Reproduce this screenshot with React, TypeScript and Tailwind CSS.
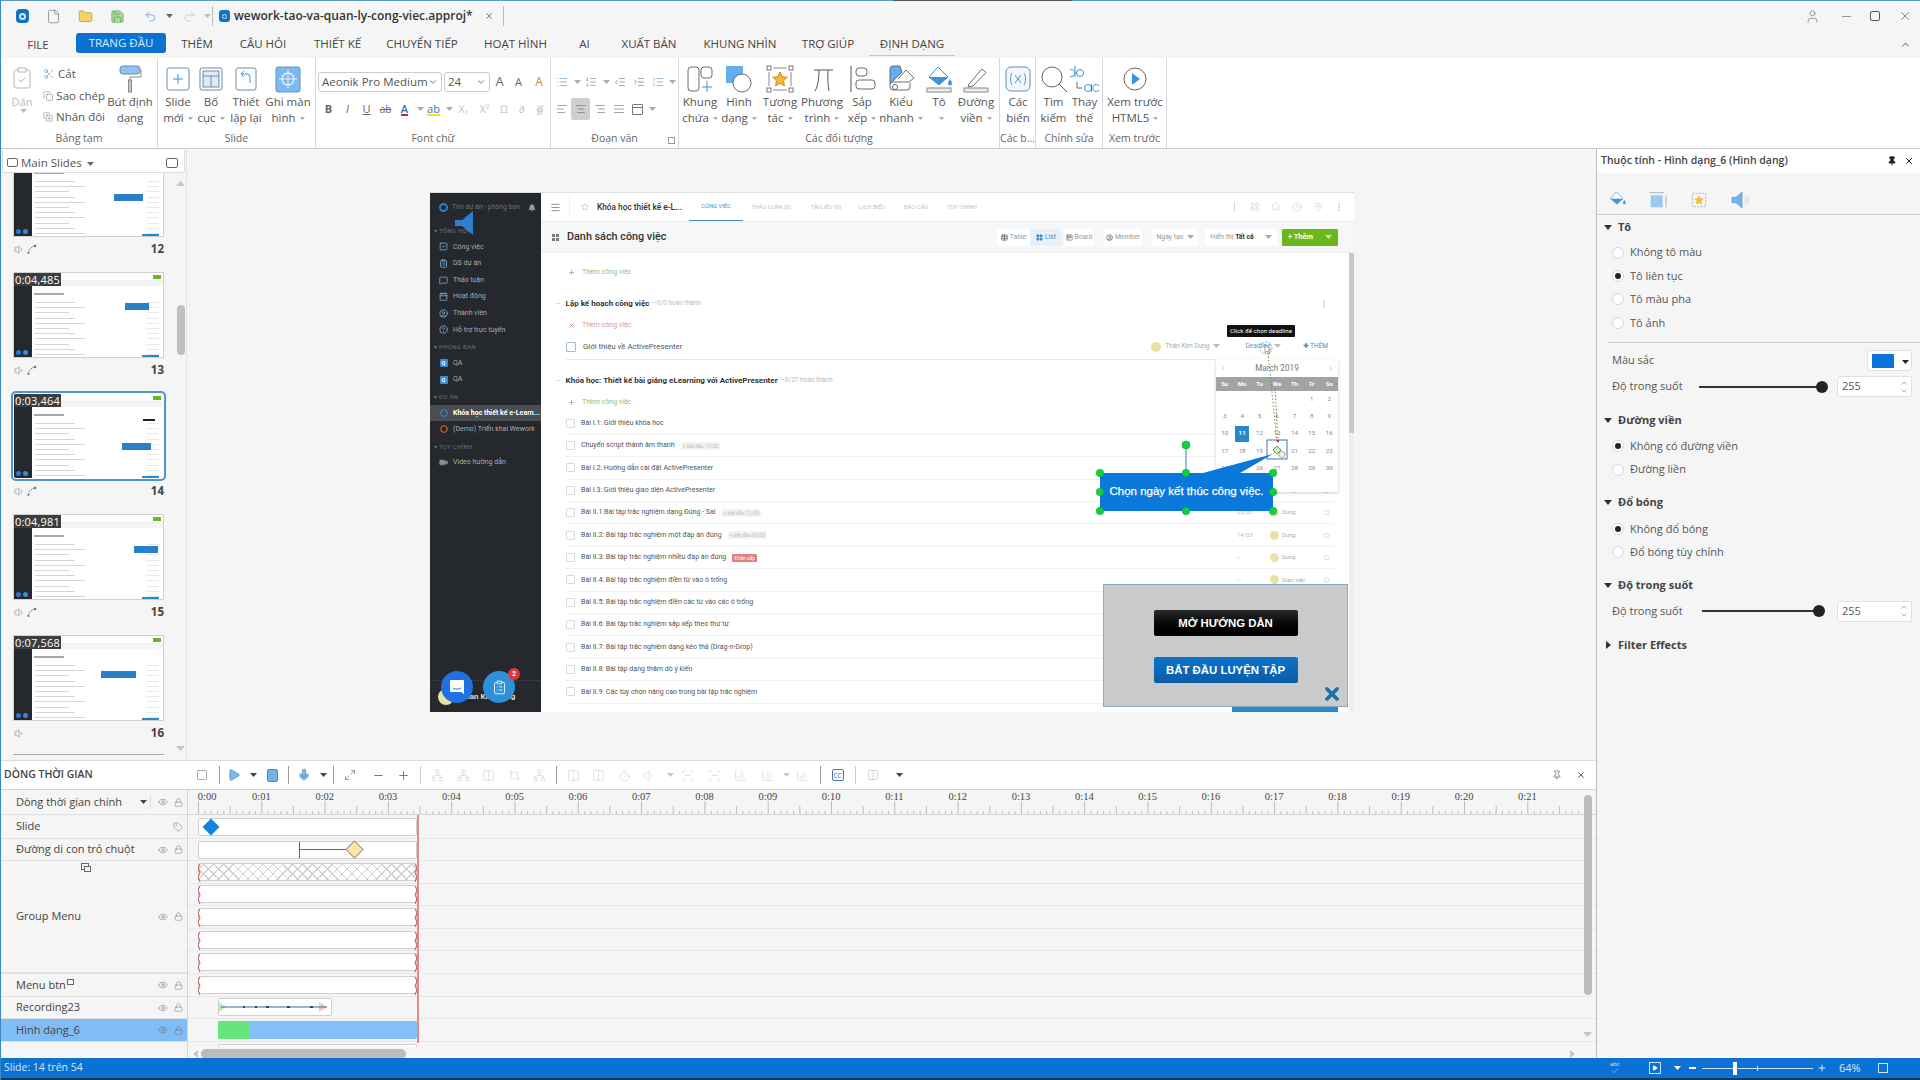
import React from "react";
import {
  Scissors, Copy, CopyPlus, ClipboardCheck, Undo2, Redo2, X, Minus, Plus, User, Eye, Lock, Tag, Pin, ChevronDown, ChevronUp,
  File, Folder, Save, List, ListOrdered, AlignLeft, AlignCenter, AlignRight, AlignJustify, Star, Bell, Menu, Search,
  SquareCheck, ClipboardList, MessageSquare, Calendar, CircleUser, CircleHelp, Video, LayoutGrid, Table, Clock, MapPin,
  EllipsisVertical, Square, Play, Mic, Volume1, Columns2, BarChart3, Network, Crop, Maximize2, Timer, Circle,
  ScanLine, Check, Indent, Outdent, ListCollapse, Trello,
} from "lucide-react";

const Caret = ({ c = "#8a8a8a" }: { c?: string }) => (
  <svg width="7" height="4" viewBox="0 0 7 4" className="inline-block ml-[3px] align-middle shrink-0"><path d="M0 0h7L3.5 4z" fill={c} /></svg>
);
const Tiny = () => (
  <svg width="5" height="3" viewBox="0 0 5 3" className="inline-block ml-[4px] align-middle shrink-0"><path d="M0 0h5L2.500 3z" fill="#aaa" /></svg>
);

/* ---------- ribbon icons ---------- */
const Ico = ({ children }: { children: React.ReactNode }) => (
  <svg width="30" height="30" viewBox="0 0 30 30" fill="none" stroke="#6b6b6b" strokeWidth="1">{children}</svg>
);
const icons: Record<string, React.ReactNode> = {
  newSlide: <Ico><rect x="4" y="4" width="22" height="22" rx="2" stroke="#6f8ca8" /><path d="M15 10v10M10 15h10" stroke="#3f93d8" /></Ico>,
  layout: <Ico><rect x="4" y="4" width="22" height="22" rx="2" stroke="#6f8ca8" /><rect x="7" y="7" width="16" height="16" fill="#dcebf7" stroke="#6f8ca8" /><path d="M7 12h16M15 12v11" stroke="#6f8ca8" /></Ico>,
  reset: <Ico><rect x="5" y="4" width="20" height="22" rx="2" stroke="#6f8ca8" /><path d="M19 19v-6a3 3 0 0 0-3-3h-5m2-3l-3 3 3 3" stroke="#3f93d8" /></Ico>,
  record: <svg width="30" height="30" viewBox="0 0 30 30" fill="none"><rect x="3" y="3" width="24" height="25" rx="2" fill="#7db9ee" stroke="#5d97c8" /><circle cx="15" cy="15" r="6" stroke="#e8f3fc" strokeWidth="1.4" /><path d="M15 6v18M6 15h18" stroke="#e8f3fc" /></svg>,
  frame: <Ico><rect x="3" y="3" width="11" height="24" rx="3" /><rect x="16" y="3" width="11" height="11" rx="3" /><path d="M22 17v11M17 23h10" stroke="#3f93d8" /></Ico>,
  shape: <svg width="30" height="30" viewBox="0 0 30 30" fill="none"><rect x="2" y="2" width="17" height="17" fill="#63aef0" /><circle cx="18" cy="19" r="9" fill="#fff" stroke="#6b6b6b" /></svg>,
  interact: <svg width="30" height="30" viewBox="0 0 30 30" fill="none"><rect x="4" y="4" width="22" height="22" stroke="#888" strokeDasharray="14 8" strokeDashoffset="-4" /><rect x="2" y="2" width="4" height="4" fill="#fff" stroke="#777" /><rect x="24" y="2" width="4" height="4" fill="#fff" stroke="#777" /><rect x="2" y="24" width="4" height="4" fill="#fff" stroke="#777" /><rect x="24" y="24" width="4" height="4" fill="#fff" stroke="#777" /><path d="M15 8l2.200 4.600 5 .7-3.700 3.500 1 5L15 19.400l-4.500 2.400 1-5-3.700-3.500 5-.7z" fill="#f5b63a" stroke="#c98d20" /></svg>,
  pi: <Ico><path d="M7 6h19M12 6c0 8-1 16-4 21M21 6c-.5 8 0 16 1 21" stroke="#555" /></Ico>,
  arrange: <Ico><path d="M4 2v26" stroke="#555" /><rect x="9" y="4" width="11" height="8" rx="3" /><rect x="9" y="16" width="19" height="9" rx="3" /></Ico>,
  quick: <svg width="30" height="30" viewBox="0 0 30 30" fill="none"><path d="M4 5a3 3 0 0 1 3-3h7l2 6-12 12z" fill="#63aef0" stroke="#6b6b6b" /><path d="M12 15l8-9 8 8-5 4H6a3 3 0 0 0-2 2v3a3 3 0 0 0 3 3h14a3 3 0 0 0 3-3v-4" stroke="#6b6b6b" /><circle cx="9" cy="23" r="2.500" stroke="#6b6b6b" /></svg>,
  fill: <svg width="30" height="30" viewBox="0 0 30 30" fill="none"><path d="M14 3l10 10-9 8-10-8z" fill="#fff" stroke="#3f93d8" /><path d="M5 13h19l-9 8z" fill="#3f93d8" /><path d="M26 15c1.500 2.500 2 3.500 2 4.500a2 2 0 0 1-4 0c0-1 .5-2 2-4.500z" fill="#3f93d8" /><rect x="3" y="24" width="24" height="4" fill="#eee" stroke="#888" /></svg>,
  line: <Ico><path d="M8 20L21 5l4 3.500L12 22l-5 1z" /><rect x="3" y="24" width="24" height="4" fill="#eee" stroke="#888" /></Ico>,
  vars: <svg width="30" height="30" viewBox="0 0 30 30" fill="none"><rect x="3" y="3" width="24" height="24" rx="5" stroke="#5b8fb8" fill="#f2f8fd" /><path d="M9 9c-2 3-2 9 0 12M21 9c2 3 2 9 0 12" stroke="#5b8fb8" /><path d="M12 11l6 8M18 11l-6 8" stroke="#3f93d8" /></svg>,
  find: <Ico><circle cx="13" cy="13" r="10" stroke="#666" /><path d="M20 20l8 8" stroke="#666" /></Ico>,
  replace: <svg width="30" height="30" viewBox="0 0 30 30" fill="none"><circle cx="10" cy="9" r="3.500" stroke="#3f93d8" /><path d="M5 2v11M5 9a3.500 3.500 0 1 0 0 .1" stroke="#3f93d8" /><path d="M7 18v6h5" stroke="#666" /><circle cx="18" cy="24" r="3.500" stroke="#3f93d8" /><path d="M21.500 20v8" stroke="#3f93d8" /><path d="M29 22a3.500 3.500 0 1 0 0 4" stroke="#3f93d8" /></svg>,
  preview: <svg width="30" height="30" viewBox="0 0 30 30" fill="none"><circle cx="15" cy="15" r="11" stroke="#666" /><path d="M12 9l8 6-8 6z" fill="#3f93d8" /></svg>,
};

const Big = ({ w, ic, a, b, caret = true }: { w: string; ic: string; a: string; b: string; caret?: boolean }) => (
  <div className={`${w} flex flex-col items-center shrink-0`}>
    <div className="h-[36px] flex items-center justify-center pt-[6px]">{icons[ic]}</div>
    <div className="text-[11.5px] leading-[16px] whitespace-nowrap text-center">{a}</div>
    <div className="text-[11.5px] leading-[16px] whitespace-nowrap text-center">{b}{caret && <Tiny />}</div>
  </div>
);

const Group = ({ w, label, children, corner }: { w: string; label: string; children: React.ReactNode; corner?: boolean }) => (
  <div className={`${w} shrink-0 h-full flex flex-col border-r border-[#d8d8d8] relative`}>
    <div className="h-[70px] flex">{children}</div>
    <div className="h-[20px] text-[10.5px] text-[#666] text-center leading-[20px] whitespace-nowrap overflow-hidden">{label}</div>
    {corner && <div className="absolute right-[3px] bottom-[4px] w-[7px] h-[7px] border border-[#999]" />}
  </div>
);

const TABS: [string, string][] = [
  ["THÊM", "w-[62px]"], ["CÂU HỎI", "w-[70px]"], ["THIẾT KẾ", "w-[79px]"], ["CHUYỂN TIẾP", "w-[90px]"], ["HOẠT HÌNH", "w-[97px]"],
  ["AI", "w-[41px]"], ["XUẤT BẢN", "w-[88px]"], ["KHUNG NHÌN", "w-[94px]"], ["TRỢ GIÚP", "w-[82px]"],
];

const TitleBar = () => (
  <div className="h-[30px] shrink-0 flex items-center text-[#555]">
    <div className="w-[11px]" />
    <div className="w-[20px] h-[18px] flex items-center justify-center"><div className="w-[13px] h-[14px] rounded-[4px] bg-[#1273c4] flex items-center justify-center"><div className="w-[7px] h-[7px] rounded-full border-2 border-[#cde6fa]" /></div></div>
    <div className="w-[42px] flex justify-center"><File size={15} strokeWidth={1} color="#666" /></div>
    <div className="w-[22px] flex justify-center"><Folder size={15} strokeWidth={1} color="#a88a20" fill="#f4d467" /></div>
    <div className="w-[43px] flex justify-center"><Save size={15} strokeWidth={1} color="#5a8a50" fill="#a6dc9a" /></div>
    <div className="w-[22px] flex justify-center"><Undo2 size={13} color="#4f92c8" strokeWidth={1.2} /></div>
    <div className="w-[14px] flex justify-center"><Caret c="#666" /></div>
    <div className="w-[28px] flex justify-center"><Redo2 size={13} color="#bdbdbd" strokeWidth={1.2} /></div>
    <div className="w-[6px] flex justify-center"><Caret c="#bdbdbd" /></div>
    <div className="w-px h-[20px] bg-[#bbb] ml-[3px]" />
    <div className="ml-[6px] w-[11px] h-[12px] rounded-[3px] bg-[#1273c4] flex items-center justify-center"><div className="w-[5px] h-[5px] rounded-full border border-[#cde6fa]" /></div>
    <div className="ml-[4px] text-[12px] font-semibold text-[#333] leading-none whitespace-nowrap">wework-tao-va-quan-ly-cong-viec.approj*</div>
    <X size={10} className="ml-[11px]" color="#666" strokeWidth={2} />
    <div className="w-px h-[20px] bg-[#bbb] ml-[9px]" />
    <div className="flex-1" />
    <User size={15} strokeWidth={1} color="#666" />
    <div className="w-[9px] h-px bg-[#999] ml-[22px]" />
    <div className="ml-[19px] w-[10px] h-[10px] border border-[#555] rounded-[2px] bg-[#f5f5f5]" />
    <X size={14} className="ml-[18px] mr-[8px]" color="#555" strokeWidth={1.2} />
  </div>
);

const TabRow = () => (
  <div className="h-[27px] shrink-0 flex items-center text-[11.5px] text-[#444] leading-none relative">
    <div className="w-[17px]" />
    <div className="w-[40px] text-center">FILE</div>
    <div className="w-[18px]" />
    <div className="w-[90px] h-[20px] mb-[4px] rounded-[3px] bg-[#0b72d3] text-[#d9ecfb] flex items-center justify-center">TRANG ĐẦU</div>
    {TABS.map(([t, w]) => <div key={t} className={`${w} text-center whitespace-nowrap mb-[2px]`}>{t}</div>)}
    <div className="w-[86px] h-[23px] flex items-center justify-center border-b border-[#f0c078] text-[#444]">ĐỊNH DẠNG</div>
    <div className="flex-1" />
    <ChevronUp size={11} className="mr-[9px]" color="#444" strokeWidth={2} />
  </div>
);

const Sm = ({ children, cls = "w-[19px]", bg = "" }: { children: React.ReactNode; cls?: string; bg?: string }) => (
  <div className={`${cls} h-[20px] flex items-center justify-center shrink-0 text-[#666] ${bg}`}>{children}</div>
);

const Ribbon = () => (
  <div className="h-[91px] shrink-0 bg-white border-b border-[#ccc] flex text-[#555]">
    <Group w="w-[157px]" label="Bảng tạm">
      <div className="w-[34px] flex flex-col items-center pt-[8px] ml-[4px] text-[#bdbdbd]">
        <ClipboardCheck size={24} strokeWidth={1} color="#b5b5b5" />
        <div className="text-[11px] mt-[5px] leading-[14px]">Dán</div>
        <Caret c="#bbb" />
      </div>
      <div className="flex flex-col w-[66px] text-[11.5px] text-[#555]">
        <div className="h-[22px] mt-[5px] flex items-center gap-[3px] ml-[4px]"><Scissors size={12} strokeWidth={1} color="#3f80b8" />Cắt</div>
        <div className="h-[21px] flex items-center gap-[3px] ml-[4px] whitespace-nowrap"><Copy size={12} strokeWidth={1} />Sao chép</div>
        <div className="h-[21px] flex items-center gap-[3px] ml-[4px] whitespace-nowrap"><CopyPlus size={12} strokeWidth={1} />Nhân đôi</div>
      </div>
      <div className="w-[50px] flex flex-col items-center">
        <div className="h-[36px] flex items-center pt-[6px]">
          <svg width="24" height="30" viewBox="0 0 24 30" fill="none"><rect x="2" y="2" width="20" height="8" rx="3" fill="#8fc3f0" stroke="#6f8ca8" /><path d="M22 6h1v7H12v3" stroke="#888" /><rect x="10.500" y="16" width="3" height="12" fill="#c9c9c9" stroke="#888" /></svg>
        </div>
        <div className="text-[11.5px] leading-[16px] whitespace-nowrap">Bút định</div>
        <div className="text-[11.5px] leading-[16px]">dạng</div>
      </div>
    </Group>
    <Group w="w-[158px]" label="Slide">
      <div className="w-[3px]" />
      <Big w="w-[34px]" ic="newSlide" a="Slide" b="mới" />
      <Big w="w-[32px]" ic="layout" a="Bố" b="cục" />
      <Big w="w-[38px]" ic="reset" a="Thiết" b="lập lại" caret={false} />
      <Big w="w-[46px]" ic="record" a="Ghi màn" b="hình" />
    </Group>
    <Group w="w-[235px]" label="Font chữ">
      <div className="flex flex-col w-full pl-[2px] pt-[14px]">
        <div className="flex items-center h-[20px]">
          <div className="w-[124px] h-[20px] border border-[#ccc] rounded-[3px] flex items-center justify-between px-[3px] text-[11.5px] text-[#555] whitespace-nowrap">Aeonik Pro Medium<ChevronDown size={10} /></div>
          <div className="w-[46px] h-[20px] ml-[2px] border border-[#ccc] rounded-[3px] flex items-center justify-between px-[3px] text-[11.5px] text-[#555]">24<ChevronDown size={10} /></div>
          <Sm cls="w-[19px] text-[13px]">A</Sm><Sm cls="w-[19px] text-[11px]">A</Sm><Sm cls="w-[22px] text-[12px] text-[#c98d20]">A</Sm>
        </div>
        <div className="flex items-center h-[22px] mt-[6px] ml-[1px] text-[11px]">
          <Sm cls="w-[19px] font-bold">B</Sm><Sm cls="w-[19px] italic">I</Sm><Sm cls="w-[19px] underline">U</Sm><Sm cls="w-[19px] line-through text-[10px]">ab</Sm>
          <Sm cls="w-[19px]"><span className="border-b-2 border-[#d92020] leading-[11px] text-[#3377bb] font-semibold">A</span></Sm><Sm cls="w-[10px]"><Caret c="#aaa" /></Sm>
          <Sm cls="w-[19px]"><span className="border-b-2 border-[#f5e020] leading-[11px] text-[#3377bb]">ab</span></Sm><Sm cls="w-[10px]"><Caret c="#aaa" /></Sm>
          <Sm cls="w-[21px] text-[#c0c0c0] text-[10px]">X₁</Sm><Sm cls="w-[21px] text-[#c0c0c0] text-[10px]">X²</Sm><Sm cls="w-[18px] text-[#c0c0c0] text-[10px]">Ω</Sm><Sm cls="w-[18px] text-[#c0c0c0] text-[10px]">∂</Sm><Sm cls="w-[18px] text-[#c0c0c0] text-[10px]">∯</Sm>
        </div>
      </div>
    </Group>
    <Group w="w-[128px]" label="Đoạn văn" corner>
      <div className="flex flex-col w-full pl-[1px] pt-[14px]">
        <div className="flex h-[20px] items-center">
          <Sm><List size={12} strokeWidth={1.2} color="#4b8cc4" /></Sm><Sm cls="w-[10px]"><Caret c="#aaa" /></Sm>
          <Sm><ListOrdered size={12} strokeWidth={1.2} color="#4b8cc4" /></Sm><Sm cls="w-[10px]"><Caret c="#aaa" /></Sm>
          <Sm><Outdent size={12} strokeWidth={1.2} /></Sm><Sm><Indent size={12} strokeWidth={1.2} /></Sm>
          <Sm><ListCollapse size={12} strokeWidth={1.2} color="#4b8cc4" /></Sm><Sm cls="w-[8px]"><Caret c="#aaa" /></Sm>
        </div>
        <div className="flex h-[22px] mt-[6px] items-center">
          <Sm><AlignLeft size={12} strokeWidth={1.2} /></Sm>
          <Sm bg="bg-[#cfcfcf] rounded-[2px] !h-[22px]"><AlignCenter size={12} strokeWidth={1.2} /></Sm>
          <Sm><AlignRight size={12} strokeWidth={1.2} /></Sm><Sm><AlignJustify size={12} strokeWidth={1.2} /></Sm>
          <Sm><div className="w-[11px] h-[11px] border border-[#777] rounded-[1px]"><div className="h-[3px] border-b border-[#777]" /></div></Sm><Sm cls="w-[8px]"><Caret c="#aaa" /></Sm>
        </div>
      </div>
    </Group>
    <Group w="w-[321px]" label="Các đối tượng">
      <div className="w-[2px]" />
      <Big w="w-[38px]" ic="frame" a="Khung" b="chứa" />
      <Big w="w-[40px]" ic="shape" a="Hình" b="dạng" />
      <Big w="w-[42px]" ic="interact" a="Tương" b="tác" />
      <Big w="w-[42px]" ic="pi" a="Phương" b="trình" />
      <Big w="w-[38px]" ic="arrange" a="Sắp" b="xếp" />
      <Big w="w-[40px]" ic="quick" a="Kiểu" b="nhanh" />
      <Big w="w-[36px]" ic="fill" a="Tô" b="" />
      <Big w="w-[38px]" ic="line" a="Đường" b="viền" />
    </Group>
    <Group w="w-[36px]" label="Các b...">
      <Big w="w-[36px]" ic="vars" a="Các" b="biến" caret={false} />
    </Group>
    <Group w="w-[67px]" label="Chỉnh sửa">
      <div className="w-[2px]" />
      <Big w="w-[31px]" ic="find" a="Tìm" b="kiếm" caret={false} />
      <Big w="w-[31px]" ic="replace" a="Thay" b="thế" caret={false} />
    </Group>
    <Group w="w-[64px]" label="Xem trước">
      <Big w="w-[64px]" ic="preview" a="Xem trước" b="HTML5" />
    </Group>
    <div className="flex-1" />
  </div>
);

/* ---------- slide thumbnails ---------- */
type ThumbD = { n: number; t?: string; cx: string; cy: string; cw: string; sel?: boolean; clip?: boolean; cursor?: boolean };
const THUMBS: ThumbD[] = [
  { n: 12, cx: "left-[100px]", cy: "top-[42px]", cw: "w-[29px]", clip: true, cursor: true },
  { n: 13, t: "0:04,485", cx: "left-[111px]", cy: "top-[30px]", cw: "w-[24px]", cursor: true },
  { n: 14, t: "0:03,464", cx: "left-[108px]", cy: "top-[49px]", cw: "w-[29px]", sel: true, cursor: true },
  { n: 15, t: "0:04,981", cx: "left-[120px]", cy: "top-[31px]", cw: "w-[24px]", cursor: true },
  { n: 16, t: "0:07,568", cx: "left-[87px]", cy: "top-[35px]", cw: "w-[35px]" },
];
const Thumb = ({ d }: { d: ThumbD }) => (
  <div className={`h-[121px] shrink-0 ${d.clip ? "-mt-[22px]" : ""}`}>
    <div className={`w-[151px] h-[86px] bg-white relative overflow-hidden flex border ${d.sel ? "outline-2 outline-[#4f93d0] rounded-[3px] border-transparent" : "border-[#d0d0d0]"}`}>
      <div className="w-[18px] h-full bg-[#25282c] flex flex-col justify-end pb-[2px] pl-[2px]">
        <div className="flex gap-[2px]"><div className="w-[5px] h-[5px] rounded-full bg-[#2a76d8]" /><div className="w-[5px] h-[5px] rounded-full bg-[#2e90d8]" /></div>
      </div>
      <div className="flex-1 flex flex-col">
        <div className="h-[9px] border-b border-[#eee] flex items-center justify-end pr-[2px]"><div className="w-[8px] h-[4px] bg-[#6cb71e]" /></div>
        <div className="h-[5px] bg-[#f5f5f5] mb-[7px]" />
        <div className="w-[30px] h-[2px] bg-[#aaa] ml-[2px] mb-[5px]" />
        {Array.from({ length: 11 }).map((_, i) => (
          <div key={i} className="h-[5.600px] flex items-center pl-[3px] pr-[4px] justify-between">
            <div className={`h-px bg-[#d4d4d4] ${i % 3 === 0 ? "w-[40px]" : i % 3 === 1 ? "w-[50px]" : "w-[34px]"}`} />
            <div className="h-px w-[12px] bg-[#e8e8e8]" />
          </div>
        ))}
      </div>
      <div className={`absolute ${d.cx} ${d.cy} ${d.cw} h-[7px] bg-[#2a80c8]`} />
      <div className="absolute right-[4px] bottom-0 w-[17px] h-[2px] bg-[#2a88cc]" />
      {d.sel && <div className="absolute left-[129px] top-[25px] w-[12px] h-[2px] bg-[#222]" />}
      {d.t && <div className="absolute left-0 top-0 h-[13px] px-[1px] bg-[#3d3d3d] text-white text-[11px] leading-[13px] tracking-[0.2px]">{d.t}</div>}
    </div>
    <div className="flex items-center justify-between w-[151px] h-[24px]">
      <div className="flex items-center gap-[2px] ml-[1px]">
        <Volume1 size={11} strokeWidth={1.1} color="#666" />
        {d.cursor && <svg width="10" height="10" viewBox="0 0 10 10" fill="none"><path d="M1 9C2 6 4 3 7 2" stroke="#777" strokeDasharray="2 1" /><circle cx="8" cy="2" r="1.300" fill="#3f80b8" /><circle cx="1.500" cy="9" r="1" fill="#3f80b8" /></svg>}
      </div>
      <div className="text-[11.5px] font-bold text-[#444] leading-none">{d.n}</div>
    </div>
  </div>
);

const SlidePanel = () => (
  <div className="w-[186px] h-full shrink-0 flex flex-col border-r border-[#e2e2e2]">
    <div className="mt-[1px] h-[23px] pt-[3px] mx-[1px] bg-white rounded-b-[3px] border border-t-0 border-[#ddd] flex items-center shrink-0 text-[#555] relative z-10">
      <div className="ml-[4px] w-[11px] h-[9px] border border-[#666] rounded-[2px] shrink-0" />
      <div className="ml-[3px] text-[11.5px] whitespace-nowrap">Main Slides</div>
      <div className="ml-[2px]"><Caret c="#666" /></div>
      <div className="flex-1" />
      <div className="mr-[6px] w-[12px] h-[10px] border border-[#666] rounded-[2px] shrink-0" />
    </div>
    <div className="flex-1 flex min-h-0">
      <div className="w-[174px] pl-[12px] flex flex-col overflow-hidden">
        {THUMBS.map(d => <Thumb key={d.n} d={d} />)}
        <div className="w-[151px] h-px bg-[#aaa] mt-[-2px]" />
      </div>
      <div className="w-[11px] flex flex-col items-center">
        <svg width="9" height="5" viewBox="0 0 9 5" className="mt-[8px]"><path d="M0 5L4.500 0 9 5z" fill="#c5c5c5" /></svg>
        <div className="w-[8px] h-[50px] mt-[119px] rounded-full bg-[#c0c0c0]" />
        <div className="flex-1" />
        <svg width="9" height="5" viewBox="0 0 9 5" className="mb-[9px]"><path d="M0 0L4.500 5 9 0z" fill="#c5c5c5" /></svg>
      </div>
    </div>
  </div>
);

/* ---------- slide ---------- */
const Section = ({ t }: { t: string }) => (
  <div className="h-[16.600px] flex items-center pl-[4px] text-[6px] text-[#6f7378] tracking-[0.3px]">▾ {t}</div>
);
const Item = ({ ic, t, active }: { ic: React.ReactNode; t: string; active?: boolean }) => (
  <div className={`h-[16.600px] flex items-center pl-[9px] gap-[5px] text-[7px] whitespace-nowrap ${active ? "bg-[#4a4d52] text-white font-bold" : "text-[#a9adb2]"}`}>
    <span className="w-[9px] h-[9px] flex items-center justify-center shrink-0">{ic}</span>{t}
  </div>
);
const QA = <span className="w-[8px] h-[8px] bg-[#3a8ad0] rounded-[1px] text-white text-[5.500px] leading-[8px] text-center font-bold">Q</span>;

const Sidebar = () => (
  <div className="w-[111px] h-full shrink-0 bg-[#25282c] flex flex-col relative">
    <div className="h-[29px] flex items-center pl-[9px] text-[6.800px] text-[#6f7378] whitespace-nowrap">
      <span className="w-[9px] h-[9px] rounded-full border-2 border-[#2e7fc0] mr-[4px] shrink-0" />Tìm dự án - phòng ban
      <Bell size={8} className="ml-[8px]" color="#9a9da2" fill="#9a9da2" />
    </div>
    <Section t="TỔNG HỢP" />
    <Item ic={<SquareCheck size={9} color="#8ab4d8" />} t="Công việc" />
    <Item ic={<ClipboardList size={9} color="#8ab4d8" />} t="DS dự án" />
    <Item ic={<MessageSquare size={9} color="#8ab4d8" />} t="Thảo luận" />
    <Item ic={<Calendar size={9} color="#8ab4d8" />} t="Hoạt động" />
    <Item ic={<CircleUser size={9} color="#8ab4d8" />} t="Thành viên" />
    <Item ic={<CircleHelp size={9} color="#8ab4d8" />} t="Hỗ trợ trực tuyến" />
    <Section t="PHÒNG BAN" />
    <Item ic={QA} t="QA" />
    <Item ic={QA} t="QA" />
    <Section t="DỰ ÁN" />
    <Item ic={<Circle size={8} color="#3a8ad0" strokeWidth={3} />} t="Khóa học thiết kế e-Learn..." active />
    <Item ic={<Circle size={8} color="#e07020" strokeWidth={3} />} t="(Demo) Triển khai Wework" />
    <Section t="TÙY CHỈNH" />
    <Item ic={<Video size={9} color="#8a8d92" fill="#8a8d92" />} t="Video hướng dẫn" />
    <div className="flex-1" />
    <div className="h-[32px] border-t border-[#34373b] flex items-center pl-[8px] gap-[6px]">
      <div className="w-[16px] h-[16px] rounded-full bg-[#e8e2a8]" />
      <div className="text-[8px] font-bold text-[#ddd] whitespace-nowrap">Phan Kim Dung</div>
    </div>
    {/* speaker object and floating buttons sit on top of the sidebar */}
    <svg className="absolute left-[24px] top-[18px]" width="20" height="24" viewBox="0 0 20 24"><path d="M1 9h7l11-9v24L8 15H1z" fill="#2f7fd0" /></svg>
    <div className="absolute left-[11px] top-[478px] w-[32px] h-[32px] rounded-full bg-[#1f72e0] flex items-center justify-center">
      <svg width="16" height="16" viewBox="0 0 16 16"><path d="M2 1h12a1 1 0 0 1 1 1v13l-3-2H2a1 1 0 0 1-1-1V2a1 1 0 0 1 1-1z" fill="#fff" /><path d="M4 9c2 1.500 6 1.500 8 0" stroke="#1f72e0" fill="none" /></svg>
    </div>
    <div className="absolute left-[53px] top-[478px] w-[32px] h-[32px] rounded-full bg-[#2e90d8] flex items-center justify-center">
      <ClipboardList size={15} color="#fff" strokeWidth={1.4} />
    </div>
    <div className="absolute left-[78px] top-[475px] w-[12px] h-[12px] rounded-full bg-[#d83a3a] text-white text-[7px] text-center leading-[12px] font-bold">2</div>
  </div>
);

const SlideTabs: [string, string, boolean?][] = [
  ["CÔNG VIỆC", "w-[54px]", true], ["THẢO LUẬN (0)", "w-[56px]"], ["TÀI LIỆU (0)", "w-[54px]"], ["LỊCH BIỂU", "w-[38px]"], ["BÁO CÁO", "w-[50px]"], ["TÙY CHỈNH", "w-[42px]"],
];
const TopBar = () => (
  <div className="h-[29px] shrink-0 bg-white border-b border-[#ececec] flex items-center">
    <Menu size={11} className="ml-[9px]" color="#888" />
    <div className="w-px h-[22px] bg-[#f0f0f0] ml-[8px]" />
    <Star size={8} className="ml-[11px]" color="#bbb" />
    <div className="ml-[8px] w-[92px] text-[8.300px] text-[#333] whitespace-nowrap font-medium">Khóa học thiết kế e-L...</div>
    {SlideTabs.map(([t, w, a]) => (
      <div key={t} className={`${w} h-full flex items-center justify-center text-[5.800px] whitespace-nowrap ${a ? "text-[#4a90c8] border-b border-[#4a90c8]" : "text-[#c0c0c0]"}`}>{t}</div>
    ))}
    <div className="flex-1" />
    <div className="w-px h-[10px] bg-[#d8d8d8]" />
    <div className="flex items-center gap-[11px] mr-[10px] ml-[15px] text-[#bbb]">
      <LayoutGrid size={10} strokeWidth={1} /><Search size={10} strokeWidth={1} /><Clock size={10} strokeWidth={1} /><MapPin size={10} strokeWidth={1} /><EllipsisVertical size={10} strokeWidth={1.5} />
    </div>
  </div>
);

const Segm = ({ w, ic, t, on }: { w: string; ic: React.ReactNode; t: string; on?: boolean }) => (
  <div className={`${w} h-[17px] flex items-center justify-center gap-[2px] text-[6.800px] ${on ? "bg-[#e6f1f9] text-[#4a90c8]" : "bg-white text-[#999]"}`}>{ic}{t}</div>
);
const Bar2 = () => (
  <div className="h-[31px] shrink-0 bg-[#f6f7f8] flex items-center border-b border-[#eee]">
    <span className="ml-[11px] w-[7px] h-[7px] grid grid-cols-2 gap-[1px]"><i className="bg-[#777]" /><i className="bg-[#777]" /><i className="bg-[#777]" /><i className="bg-[#777]" /></span>
    <div className="ml-[8px] text-[10.800px] font-medium text-[#333] whitespace-nowrap">Danh sách công việc</div>
    <div className="flex-1" />
    <Segm w="w-[33px]" ic={<Table size={7} color="#444" />} t="Table" />
    <Segm w="w-[32px]" ic={<LayoutGrid size={7} color="#3a8ad0" fill="#3a8ad0" />} t="List" on />
    <Segm w="w-[30px] ml-[2px]" ic={<Trello size={7} color="#555" />} t="Board" />
    <Segm w="w-[38px] ml-[10px]" ic={<CircleUser size={7} color="#555" />} t="Member" />
    <div className="w-[46px] h-[17px] ml-[10px] bg-white flex items-center justify-center text-[6.800px] text-[#999]">Ngày tạo<Caret c="#aaa" /></div>
    <div className="w-[72px] h-[17px] ml-[7px] bg-white flex items-center justify-center text-[6.800px] text-[#999]">Hiển thị&nbsp;<b className="text-[#333]">Tất cả</b><span className="ml-[8px]"><Caret c="#aaa" /></span></div>
    <div className="w-[56px] h-[17px] ml-[5px] mr-[16px] bg-[#6cb71e] rounded-[1px] flex items-center justify-center text-white text-[7.500px] font-bold">+ Thêm<span className="ml-[9px]"><Caret c="#cde8a8" /></span></div>
  </div>
);

const TaskRow = ({ t, tag, red, date, who }: { t: string; tag?: string; red?: boolean; date?: string; who?: string }) => (
  <div className="h-[22.400px] shrink-0 flex items-center border-b border-[#f0f0f0] ml-[25px] mr-[15px] text-[7.050px] text-[#555]">
    <span className="w-[9px] h-[9px] border border-[#d8d8d8] shrink-0 rounded-[1px]" />
    <span className="ml-[6px] whitespace-nowrap">{t}</span>
    {tag && <span className={`ml-[6px] px-[2px] h-[8px] leading-[8px] text-[5px] ${red ? "bg-[#e08080] text-white" : "bg-[#f2f2f2] text-[#bbb]"} rounded-[1px]`}>{tag}</span>}
    <div className="flex-1" />
    {date && <span className="w-[33px] text-[5.800px] text-[#bbb]">{date}</span>}
    {who && <span className="w-[53px] flex items-center text-[5.800px] text-[#aaa]"><span className="w-[9px] h-[9px] rounded-full bg-[#e8e2a8] mr-[3px]" />{who}</span>}
    {who && <Star size={7} color="#ccc" className="mr-[4px]" />}
  </div>
);
const TASKS = [
  { t: "Bài I.1: Giới thiệu khóa học" },
  { t: "Chuyển script thành âm thanh", tag: "+ bắt đầu 11/03" },
  { t: "Bài I.2: Hướng dẫn cài đặt ActivePresenter" },
  { t: "Bài I.3: Giới thiệu giao diện ActivePresenter", who: "Dung" },
  { t: "Bài II.1 Bài tập trắc nghiệm dạng Đúng - Sai", tag: "+ bắt đầu 12/03", date: "25/03", who: "Dung" },
  { t: "Bài II.2: Bài tập trắc nghiệm một đáp án đúng", tag: "+ bắt đầu 06/03", date: "14/03", who: "Dung" },
  { t: "Bài II.3: Bài tập trắc nghiệm nhiều đáp án đúng", tag: "Khẩn cấp", red: true, date: "—", who: "Dung" },
  { t: "Bài II.4: Bài tập trắc nghiệm điền từ vào ô trống", date: "—", who: "Giao việc" },
  { t: "Bài II.5: Bài tập trắc nghiệm điền các từ vào các ô trống" },
  { t: "Bài II.6: Bài tập trắc nghiệm sắp xếp theo thứ tự" },
  { t: "Bài II.7: Bài tập trắc nghiệm dạng kéo thả (Drag-n-Drop)" },
  { t: "Bài II.8: Bài tập dạng thăm dò ý kiến" },
  { t: "Bài II.9: Các tùy chọn nâng cao trong bài tập trắc nghiệm" },
];

const CAL = [["", "", "", "", "", "1", "2"], ["3", "4", "5", "6", "7", "8", "9"], ["10", "11", "12", "13", "14", "15", "16"], ["17", "18", "19", "20", "21", "22", "23"], ["24", "25", "26", "27", "28", "29", "30"]];
const Calendar2 = () => (
  <div className="absolute left-[786px] top-[166px] w-[122px] h-[133px] bg-white shadow-[0_1px_3px_rgba(0,0,0,0.2)] flex flex-col font-['Roboto',sans-serif]">
    <div className="h-[18px] flex items-center justify-between px-[6px] text-[8.200px] text-[#777]"><span className="text-[#bbb]">‹</span>March 2019<span className="text-[#bbb]">›</span></div>
    <div className="h-[14px] bg-[#a3a3a3] grid grid-cols-7 text-white text-[6px] font-bold text-center leading-[14px]">
      {["Su", "Mo", "Tu", "We", "Th", "Fr", "Sa"].map(d => <span key={d}>{d}</span>)}
    </div>
    <div className="flex flex-col">
      {CAL.map((r, i) => (
        <div key={i} className="h-[17.200px] grid grid-cols-7 text-[6.200px] text-[#888] text-center leading-[17px]">
          {r.map((n, j) => <span key={j} className={n === "11" ? "bg-[#2a88cc] text-white font-bold mx-[2px] my-[1px] leading-[15px]" : ""}>{n}</span>)}
        </div>
      ))}
    </div>
  </div>
);

const OverlaySvg = () => (
  <svg className="absolute left-[2px] top-0 pointer-events-none" width="922" height="520" viewBox="0 0 922 520" fill="none">
    <circle cx="834" cy="155" r="6" stroke="#5aa0d8" strokeDasharray="1.500 1.500" />
    <path d="M836 160L845 250" stroke="#5ca040" strokeDasharray="1.500 2" />
    <path d="M843 195L846 250" stroke="#c06040" strokeDasharray="1.500 2" />
    <rect x="835" y="247" width="20" height="19" stroke="#3a78b0" />
    <path d="M771 280L841 261L808 280z" fill="#0b78dc" />
    <path d="M754 252v28" stroke="#2a80c0" />
    {[[668, 280], [754, 280], [841, 280], [668, 299], [841, 299], [668, 318], [754, 318], [841, 318]].map(([x, y], i) => <circle key={i} cx={x} cy={y} r="3.800" fill="#10d040" stroke="#0a9a30" strokeWidth=".5" />)}
    <circle cx="754" cy="252" r="4" fill="#10d040" stroke="#0a9a30" strokeWidth=".5" />
    <path d="M841 257l4-4 4 4-4 4z" fill="#d8f0d0" stroke="#5ca040" />
    <path d="M847 260l3-2 3 2v3l-3 2-3-2z" fill="#eee" stroke="#777" strokeWidth=".6" />
    <path d="M833 152l0 8 2-2 2 3 1-1-2-3h3z" fill="#fff" stroke="#444" strokeWidth=".5" />
    <path d="M846 250l-1.500-3h3z" fill="#d03030" />
  </svg>
);

const Slide = () => (
  <div className="w-[924px] h-[520px] shrink-0 bg-white relative flex overflow-hidden font-['Roboto',sans-serif] border-t border-[#ddd]">
    <Sidebar />
    <div className="flex-1 flex flex-col min-w-0 relative">
      <TopBar />
      <Bar2 />
      <div className="flex-1 flex min-h-0">
        <div className="flex-1 flex flex-col overflow-hidden min-w-0 pt-[7px]">
          <div className="h-[24px] shrink-0 flex items-center ml-[27px] text-[7px] text-[#8bbf78]"><Plus size={7} color="#6a9a3a" className="mr-[7px]" />Thêm công việc</div>
          <div className="h-[24px] mt-[8px] shrink-0 flex items-center ml-[15px] mr-[21px] text-[8px] font-bold text-[#333]"><span className="text-[#bbb] font-normal mr-[5px]">−</span>Lập kế hoạch công việc<span className="text-[6.500px] font-normal text-[#bbb] ml-[3px]">–0/0 hoàn thành</span><div className="flex-1" /><EllipsisVertical size={8} color="#aaa" /></div>
          <div className="h-[18px] shrink-0 flex items-center ml-[27px] text-[7px] text-[#d89aa0]"><X size={7} color="#c05060" className="mr-[7px]" />Thêm công việc</div>
          <div className="h-[26px] shrink-0 flex items-center ml-[25px] mr-[21px] border-b border-[#e8e8e8] text-[7.800px] text-[#555]">
            <span className="w-[10px] h-[10px] border border-[#9cc0d8] rounded-[1px] shrink-0" />
            <span className="ml-[7px]">Giới thiệu về ActivePresenter</span>
            <div className="flex-1" />
            <span className="w-[10px] h-[10px] rounded-full bg-[#e8e2a8] mr-[4px]" /><span className="text-[6.500px] text-[#aaa] whitespace-nowrap">Thân Kim Dung<Caret c="#bbb" /></span>
            <span className="ml-[26px] text-[6.500px] text-[#5a9ad0] whitespace-nowrap">Deadline<Caret c="#bbb" /></span>
            <span className="ml-[22px] text-[6.500px] text-[#4a8ac8] whitespace-nowrap">✚ THÊM</span>
          </div>
          <div className="h-[24px] mt-[9px] shrink-0 flex items-center ml-[15px] text-[8px] font-bold text-[#333] whitespace-nowrap"><span className="text-[#bbb] font-normal mr-[5px]">−</span>Khóa học: Thiết kế bài giảng eLearning với ActivePresenter<span className="text-[6.500px] font-normal text-[#bbb] ml-[3px]">–0/27 hoàn thành</span></div>
          <div className="h-[18px] shrink-0 flex items-center ml-[27px] text-[7px] text-[#8bbf78]"><Plus size={7} color="#6a9a3a" className="mr-[7px]" />Thêm công việc</div>
          <div className="h-[1.500px] shrink-0" />
          {TASKS.map(t => <TaskRow key={t.t} {...t} />)}
        </div>
        <div className="w-[5px] shrink-0 bg-[#eee]"><div className="h-[180px] bg-[#c8c8c8]" /></div>
      </div>
    </div>
    <div className="absolute left-[797px] top-[132px] w-[68px] h-[12px] bg-[#111] text-white text-[6.200px] text-center leading-[12px] rounded-[1px] whitespace-nowrap">Click để chọn deadline</div>
    <Calendar2 />
    <div className="absolute left-[670px] top-[280px] w-[173px] h-[38px] bg-[#0b78dc] text-white text-[11.500px] text-center leading-[37px] whitespace-nowrap font-['Liberation_Sans',sans-serif] [-webkit-text-stroke:0.25px_white]">Chọn ngày kết thúc công việc.</div>
    <OverlaySvg />
    <div className="absolute left-[673px] top-[391px] w-[245px] h-[123px] bg-[#c9cacc] border border-[#8ea8bc] flex flex-col items-center pt-[25px] gap-[21px] font-['Liberation_Sans',sans-serif]">
      <div className="w-[144px] h-[26px] rounded-[2px] bg-gradient-to-b from-[#2a2a2a] to-[#000] text-white text-[11.400px] font-bold text-center leading-[26px]">MỞ HƯỚNG DẪN</div>
      <div className="w-[144px] h-[26px] rounded-[2px] bg-gradient-to-b from-[#0c74cc] to-[#0a5ca4] text-white text-[11.400px] font-bold text-center leading-[26px]">BẮT ĐẦU LUYỆN TẬP</div>
      <X size={20} strokeWidth={4.5} color="#1d70a8" className="absolute right-[5px] bottom-[2px]" />
    </div>
    <div className="absolute left-[802px] top-[514px] w-[106px] h-[6px] bg-[#2a88cc]" />
  </div>
);

/* ---------- timeline ---------- */
const Sep = ({ c = "bg-[#999]" }: { c?: string }) => <div className={`w-px h-[18px] shrink-0 ${c}`} />;
const T = ({ children, w = "w-[25.500px]" }: { children: React.ReactNode; w?: string }) => <div className={`${w} h-full flex items-center justify-center shrink-0`}>{children}</div>;
const G = "#c9c9c9";
const TLToolbar = () => (
  <div className="h-[29px] shrink-0 bg-white border-b border-[#d4d4d4] flex items-center">
    <div className="w-[188px] pl-[3px] text-[10.500px] font-semibold text-[#444] whitespace-nowrap">DÒNG THỜI GIAN</div>
    <div className="flex items-center h-full">
      <T w="w-[26px]"><Square size={12} strokeWidth={1.1} color="#666" /></T>
      <div className="w-[4px]" /><Sep />
      <T w="w-[28px]"><Play size={14} strokeWidth={1} color="#2a78c8" fill="#7db9ee" /></T>
      <T w="w-[8px]"><Caret c="#444" /></T>
      <T w="w-[32px]"><div className="w-[11px] h-[13px] rounded-[2px] bg-[#6fb4ee] border border-[#4a8ac0]" /></T>
      <Sep />
      <T w="w-[30px]"><Mic size={14} strokeWidth={1} color="#3f80b8" fill="#7db9ee" /></T>
      <T w="w-[6px]"><Caret c="#444" /></T>
      <div className="w-[8px]" /><Sep />
      <T w="w-[32px]"><Maximize2 size={12} strokeWidth={1.1} color="#555" /></T>
      <T w="w-[24px]"><Minus size={13} strokeWidth={1.400} color="#555" /></T>
      <T w="w-[26px]"><Plus size={13} strokeWidth={1.400} color="#555" /></T>
      <div className="w-[4px]" /><Sep c="bg-[#ccc]" />
      <div className="w-[4px]" />
      {[Network, Network, Columns2, Crop, Network].map((I, i) => <T key={i}><I size={13} strokeWidth={1} color={G} /></T>)}
      <div className="w-[3px]" /><Sep />
      <div className="w-[4px]" />
      {[Columns2, Columns2, Timer, Volume1].map((I, i) => <T key={i}><I size={13} strokeWidth={1} color={G} /></T>)}
      <T w="w-[12px]"><Caret c="#ccc" /></T>
      {[ScanLine, ScanLine, BarChart3, BarChart3].map((I, i) => <T key={i} w="w-[26.500px]"><I size={13} strokeWidth={1} color={G} /></T>)}
      <T w="w-[8px]"><Caret c="#ccc" /></T>
      <T w="w-[28px]"><BarChart3 size={13} strokeWidth={1} color={G} /></T>
      <div className="w-[3px]" /><Sep />
      <T w="w-[34px]"><div className="w-[12px] h-[12px] border border-[#4a78a8] rounded-[2px] text-[6.500px] text-[#4a78a8] leading-[11px] text-center">CC</div></T>
      <Sep c="bg-[#ccc]" />
      <T w="w-[34px]"><Columns2 size={12} strokeWidth={1} color="#aaa" /></T>
      <T w="w-[16px]"><Caret c="#444" /></T>
    </div>
    <div className="flex-1" />
    <Pin size={10} className="mr-[14px]" color="#444" strokeWidth={1.4} />
    <X size={10} className="mr-[10px]" color="#444" strokeWidth={2} />
  </div>
);

const Ruler = () => {
  const labels: React.ReactNode[] = [];
  for (let i = 0; i < 22; i++) {
    const s = `0:${String(i).padStart(2, "0")}`;
    labels.push(<span key={s} className={`w-[63.300px] shrink-0 text-center ${i === 0 ? "translate-x-[9px]" : ""}`}>{s}</span>);
  }
  return (
    <div className="h-[25px] shrink-0 border-b border-[#d4d4d4] relative overflow-hidden">
      <div className="flex text-[10.500px] text-[#444] leading-[14px] font-['Liberation_Serif',serif] ml-[-21.500px]">{labels}</div>
      <svg className="absolute left-0 top-0" width="1408" height="25" viewBox="0 0 1408 25">
        {Array.from({ length: 222 }).map((_, i) => { const x = 10.5 + i * 6.33; const h = i % 10 === 0 ? 13 : i % 5 === 0 ? 8 : 3; return <path key={i} d={`M${x} 24V${24 - h}`} stroke="#bdbdbd" />; })}
      </svg>
    </div>
  );
};

const Zig = ({ right }: { right?: boolean }) => (
  <svg className={`absolute top-0 ${right ? "right-[-1px]" : "left-[-1px]"}`} width="3" height="18" viewBox="0 0 3 18" fill="none"><path d={right ? "M1 0l2 4-2 5 2 4-2 5" : "M2 0L0 4l2 5-2 4 2 5"} stroke="#d84848" /></svg>
);
const Bar = ({ zig, hatch }: { zig?: boolean; hatch?: boolean }) => (
  <div className={`ml-[10px] w-[219px] h-[18px] border border-[#cfcfcf] rounded-[2px] relative ${hatch ? "bg-[repeating-linear-gradient(45deg,#d0d0d0_0,#d0d0d0_1px,#fff_1px,#fff_7px)]" : "bg-white"}`}>
    {hatch && <div className="absolute inset-0 bg-[repeating-linear-gradient(-45deg,#d0d0d0_0,#d0d0d0_1px,transparent_1px,transparent_7px)]" />}
    {zig && <Zig />}
    {zig && <Zig right />}
  </div>
);
const Lane = ({ h, children }: { h: string; children?: React.ReactNode }) => (
  <div className={`${h} shrink-0 border-b border-[#e8e8e8] flex items-center`}>{children}</div>
);
const Tracks = () => (
  <div className="flex-1 flex flex-col min-w-0 relative overflow-hidden">
    <Ruler />
    <Lane h="h-[24px]">
      <div className="ml-[10px] w-[219px] h-[18px] border border-[#cfcfcf] rounded-[2px] bg-white flex items-center">
        <div className="w-[12px] h-[12px] rotate-45 bg-[#1283e0] ml-[6px]" />
      </div>
    </Lane>
    <Lane h="h-[22px]">
      <div className="ml-[10px] w-[219px] h-[18px] border border-[#cfcfcf] rounded-[2px] bg-white flex items-center">
        <div className="ml-[100px] w-px h-full bg-[#c04040]" />
        <div className="w-[50px] h-px bg-[#3a8a3a]" />
        <div className="w-[13px] h-[13px] rotate-45 bg-[#fbe7a8] border border-[#999] -ml-[2px]" />
      </div>
    </Lane>
    <Lane h="h-[22.600px]"><Bar hatch zig /></Lane>
    <Lane h="h-[22.600px]"><Bar zig /></Lane>
    <Lane h="h-[22.600px]"><Bar zig /></Lane>
    <Lane h="h-[22.600px]"><Bar zig /></Lane>
    <Lane h="h-[22.600px]"><Bar zig /></Lane>
    <Lane h="h-[23px]"><Bar zig /></Lane>
    <Lane h="h-[22px]">
      <div className="ml-[30px] w-[114px] h-[18px] border border-[#cfcfcf] rounded-[2px] bg-white relative flex items-center">
        <svg width="112" height="16" viewBox="0 0 112 16" fill="none"><path d="M0 3l7 5-7 5z" fill="#bcecc4" /><path d="M100 3l8 5-8 5z" fill="#f4c4c8" /><path d="M2 8h106" stroke="#2a6fa8" /><path d="M24 7h2v2h-2zM36 7h2v2h-2zM47 7h3v2h-3zM68 7h3v2h-3zM91 7h3v2h-3z" fill="#1a4a78" /></svg>
      </div>
    </Lane>
    <Lane h="h-[23px]">
      <div className="ml-[30px] w-[199px] h-[18px] rounded-[2px] bg-[#83c0fa] flex">
        <div className="w-[31px] h-full bg-[#66e67a] rounded-l-[2px]" />
      </div>
    </Lane>
    <div className="h-[5px] shrink-0 overflow-hidden pt-[2px]"><div className="ml-[30px] w-[199px] h-[18px] border border-[#cfcfcf] rounded-[2px] bg-white" /></div>
    <div className="flex-1" />
    <div className="h-[14px] mb-[1px] shrink-0 flex items-center relative">
      <svg width="5" height="8" viewBox="0 0 5 8" className="ml-[5px]"><path d="M5 0L0 4l5 4z" fill="#c5c5c5" /></svg>
      <div className="ml-[3px] w-[205px] h-[10px] rounded-full bg-[#bcbcbc]" />
      <div className="flex-1" />
      <svg width="5" height="8" viewBox="0 0 5 8" className="mr-[21px]"><path d="M0 0l5 4-5 4z" fill="#c5c5c5" /></svg>
    </div>
    {/* playhead and vertical scrollbar lie over the tracks */}
    <div className="absolute left-[229px] top-[25px] w-[2px] h-[228px] bg-[#e58a8a]" />
    <div className="absolute right-[4px] top-[5px] w-[8px] h-[200px] rounded-full bg-[#bcbcbc]" />
    <svg className="absolute right-[4px] top-[242px]" width="9" height="5" viewBox="0 0 9 5"><path d="M0 0L4.500 5 9 0z" fill="#c5c5c5" /></svg>
  </div>
);
const LabelRow = ({ h, t, ic, eye = true, extra, on }: { h: string; t: string; ic?: React.ReactNode; eye?: boolean; extra?: React.ReactNode; on?: boolean }) => (
  <div className={`${h} shrink-0 flex items-center relative border-b border-[#e0e0e0] text-[11px] text-[#444] whitespace-nowrap pl-[15px] ${on ? "bg-[#80bcf5]" : ""}`}>
    <span>{t}</span>{ic}
    <div className="flex-1" />
    {extra}
    {eye && <Eye size={10} strokeWidth={1.2} color="#666" className="mr-[6px]" />}
    {eye && <Lock size={9} strokeWidth={1.2} color="#666" className="mr-[4px]" />}
  </div>
);
const Labels = () => (
  <div className="w-[187px] shrink-0 flex flex-col border-r border-[#d4d4d4]">
    <LabelRow h="h-[25px]" t="Dòng thời gian chính" extra={<><Caret c="#444" /><div className="w-px h-[14px] bg-[#ddd] ml-[3px] mr-[7px]" /></>} />
    <LabelRow h="h-[24px]" t="Slide" eye={false} extra={<Tag size={10} strokeWidth={1.2} color="#666" className="mr-[4px]" />} />
    <LabelRow h="h-[22px]" t="Đường di con trỏ chuột" />
    <div className="h-[113px] shrink-0 relative border-b border-[#e0e0e0]">
      <div className="h-full"><LabelRow h="h-full" t="Group Menu" /></div>
      <div className="absolute left-[80px] top-[2px] w-[8px] h-[7px] border border-[#666]"><div className="ml-[2px] mt-[2px] w-[7px] h-[6px] border border-[#666] bg-[#f5f5f5]" /></div>
    </div>
    <LabelRow h="h-[23px]" t="Menu btn" ic={<span className="ml-[1px] mb-[6px] w-[7px] h-[6px] border border-[#666]" />} />
    <LabelRow h="h-[22px]" t="Recording23" />
    <LabelRow h="h-[23px]" t="Hình dạng_6" on />
  </div>
);
const Timeline = () => (
  <div className="h-[298px] shrink-0 flex flex-col bg-[#f5f5f5] border-t border-[#dcdcdc]">
    <TLToolbar />
    <div className="flex-1 flex min-h-0"><Labels /><Tracks /></div>
  </div>
);

/* ---------- properties ---------- */
const Head = ({ t, mt = "", closed }: { t: string; mt?: string; closed?: boolean }) => (
  <div className={`h-[24px] flex items-center shrink-0 ${mt}`}>
    <div className="w-[10px] ml-[6px] flex justify-center">
      {closed ? <svg width="5" height="8" viewBox="0 0 5 8"><path d="M0 0l5 4-5 4z" fill="#333" /></svg> : <svg width="8" height="5" viewBox="0 0 8 5"><path d="M0 0h8L4 5z" fill="#333" /></svg>}
    </div>
    <div className="ml-[5px] text-[11px] font-bold text-[#444]">{t}</div>
  </div>
);
const Radio = ({ t, on }: { t: string; on?: boolean }) => (
  <div className="h-[23.400px] flex items-center pl-[15px] shrink-0">
    <div className="w-[12px] h-[12px] rounded-full bg-white border border-[#d8d8d8] flex items-center justify-center shrink-0">{on && <div className="w-[6px] h-[6px] rounded-full bg-[#222]" />}</div>
    <div className="ml-[6px] text-[11px] text-[#555] whitespace-nowrap">{t}</div>
  </div>
);
const SliderRow = ({ track, knob, mt = "" }: { track: string; knob: string; mt?: string }) => (
  <div className={`h-[26px] flex items-center shrink-0 pl-[15px] ${mt}`}>
    <div className="w-[87px] text-[11px] text-[#555] whitespace-nowrap">Độ trong suốt</div>
    <div className={`${track} h-[2px] bg-[#333] relative shrink-0`}><div className={`absolute ${knob} top-[-5px] w-[12px] h-[12px] rounded-full bg-[#222]`} /></div>
    <div className="flex-1" />
    <div className="w-[75px] h-[21px] mr-[8px] rounded-[3px] bg-white border border-[#e0e0e0] flex items-center justify-between pl-[4px] pr-[3px] text-[11px] text-[#555]">255<div className="flex flex-col"><ChevronUp size={8} color="#777" /><ChevronDown size={8} color="#777" /></div></div>
  </div>
);
const Props = () => (
  <div className="flex-1 h-full flex flex-col bg-[#f5f5f5] border-l border-[#bdbdbd] min-w-0">
    <div className="h-[24px] shrink-0 bg-white flex items-center pl-[4px] text-[10.500px] font-semibold text-[#444] whitespace-nowrap">
      Thuộc tính - Hình dạng_6 (Hình dạng)
      <div className="flex-1" />
      <Pin size={10} color="#222" fill="#222" className="mr-[7px]" />
      <X size={10} color="#222" strokeWidth={2.4} className="mr-[6px]" />
    </div>
    <div className="h-[42px] shrink-0 border-b border-[#ccc] flex items-center pl-[10px] pt-[12px] gap-[21px]">
      <svg width="20" height="20" viewBox="0 0 30 30" fill="none"><path d="M14 3l10 10-9 8-10-8z" fill="#fff" stroke="#3f93d8" /><path d="M5 13h19l-9 8z" fill="#3f93d8" /><path d="M26 15c1.500 2.500 2 3.500 2 4.500a2 2 0 0 1-4 0c0-1 .5-2 2-4.500z" fill="#3f93d8" /></svg>
      <svg width="20" height="20" viewBox="0 0 30 30" fill="none"><rect x="4" y="8" width="18" height="18" fill="#9cc8ee" /><path d="M2 4h22M27 8v18" stroke="#7a9ab8" /></svg>
      <svg width="20" height="20" viewBox="0 0 30 30" fill="none"><rect x="5" y="5" width="20" height="20" stroke="#999" strokeDasharray="3 2" /><path d="M15 8l2.200 4.600 5 .7-3.700 3.500 1 5L15 19.400l-4.500 2.400 1-5-3.700-3.500 5-.7z" fill="#f5b63a" /></svg>
      <svg width="20" height="20" viewBox="0 0 30 30" fill="none"><path d="M3 11h6l9-8v24l-9-8H3z" fill="#6fb4ee" stroke="#5a90c0" /><path d="M22 10c2 3 2 7 0 10M25 7c3 5 3 11 0 16" stroke="#a8c8e8" /></svg>
    </div>
    <Head t="Tô" />
    <div className="h-[2px]" />
    <Radio t="Không tô màu" /><Radio t="Tô liên tục" on /><Radio t="Tô màu pha" /><Radio t="Tô ảnh" />
    <div className="h-px bg-[#ccc] ml-[11px] mt-[7px] shrink-0" />
    <div className="h-[24px] mt-[6px] flex items-center pl-[15px] shrink-0 justify-between">
      <div className="text-[11px] text-[#555]">Màu sắc</div>
      <div className="w-[45px] h-[21px] mr-[8px] rounded-[3px] bg-white border border-[#e0e0e0] flex items-center pl-[4px]">
        <div className="w-[22px] h-[14px] bg-[#0b72d8]" /><span className="ml-[5px]"><Caret c="#222" /></span>
      </div>
    </div>
    <SliderRow track="w-[126px]" knob="right-[-3px]" mt="mt-[1px]" />
    <Head t="Đường viền" mt="mt-[9px]" />
    <div className="h-[2px]" />
    <Radio t="Không có đường viền" on /><Radio t="Đường liền" />
    <Head t="Đổ bóng" mt="mt-[9px]" />
    <div className="h-[3px]" />
    <Radio t="Không đổ bóng" on /><Radio t="Đổ bóng tùy chỉnh" />
    <Head t="Độ trong suốt" mt="mt-[9px]" />
    <SliderRow track="w-[120px] ml-[3px]" knob="right-[-3px]" mt="mt-[1px]" />
    <Head t="Filter Effects" mt="mt-[9px]" closed />
  </div>
);

const Status = () => (
  <div className="h-[20px] shrink-0 bg-[#0b72d3] flex items-center text-[#d6e9fa] text-[10.500px]">
    <div className="ml-[3px]">Slide: 14 trên 54</div>
    <div className="flex-1" />
    <div className="flex flex-col items-center leading-none text-[6px] mr-[29px]">abc<Check size={8} strokeWidth={1.400} /></div>
    <div className="w-[12px] h-[12px] border border-[#cfe4f8] mr-[10px] flex items-center justify-center"><Play size={6} fill="#fff" color="#fff" /></div>
    <Caret c="#fff" />
    <div className="w-[7px] h-[2px] bg-white ml-[8px]" />
    <div className="ml-[6px] w-[111px] h-px bg-[#cfe4f8] relative">
      <div className="absolute left-[31px] top-[-6px] w-[4px] h-[13px] bg-white" />
      <div className="absolute left-[55px] top-[-2px] w-px h-[5px] bg-[#cfe4f8]" />
    </div>
    <Plus size={10} color="#fff" className="ml-[4px]" strokeWidth={2} />
    <div className="ml-[12px] w-[28px] text-[11px]">64%</div>
    <div className="w-[10px] h-[10px] border border-[#cfe4f8] ml-[11px] mr-[32px]" />
  </div>
);

export default function App() {
  return (
    <div className="w-[1920px] h-[1080px] flex flex-col overflow-hidden bg-[#f5f5f5] border-l border-[#3b86c6] text-[#555] font-['Open_Sans','Noto_Sans',sans-serif]">
      <div className="h-px flex shrink-0"><div className="w-[892px] bg-[#5b9bc8]" /><div className="w-[179px] bg-[#555]" /><div className="flex-1 bg-[#5b9bc8]" /></div>
      <TitleBar />
      <TabRow />
      <Ribbon />
      <div className="flex-1 flex min-h-0">
        <div className="w-[1595px] shrink-0 flex flex-col">
          <div className="flex-1 flex min-h-0">
            <SlidePanel />
            <div className="flex-1 pl-[243px] pt-[43px] min-w-0"><Slide /></div>
          </div>
          <Timeline />
        </div>
        <Props />
      </div>
      <Status />
      <div className="h-[2px] shrink-0 bg-[#0d3a5c]" />
    </div>
  );
}
